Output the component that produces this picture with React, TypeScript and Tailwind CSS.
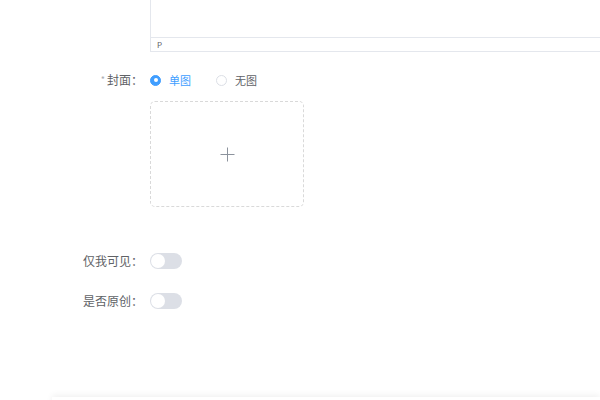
import React from "react";

const font = { fontFamily: '"Noto Sans CJK SC", "Liberation Sans", sans-serif' };

function Label({ children, required }: { children: React.ReactNode; required?: boolean }) {
  return (
    <div className="w-[150px] shrink-0 pr-[7px] text-right text-[12px] text-[#606266] leading-[20px]">
      {required && <span className="text-[#a8abb2] mr-[2px] text-[9px] align-top">*</span>}
      {children}
    </div>
  );
}

function Radio({ label, checked }: { label: string; checked?: boolean }) {
  return (
    <label className="flex items-center gap-[8px] cursor-pointer">
      <span
        className={`w-[11px] h-[11px] rounded-full border flex items-center justify-center ${
          checked ? "border-[#409eff] bg-[#409eff]" : "border-[#dcdfe6] bg-white"
        }`}
      >
        {checked && <span className="w-[4px] h-[4px] rounded-full bg-white" />}
      </span>
      <span className={`text-[11px] ${checked ? "text-[#409eff]" : "text-[#606266]"}`}>{label}</span>
    </label>
  );
}

function Switch() {
  return (
    <div className="w-[32px] h-[16px] rounded-full bg-[#dcdfe6] p-[1px] flex items-center">
      <span className="w-[14px] h-[14px] rounded-full bg-white" />
    </div>
  );
}

export default function App() {
  return (
    <div className="relative w-[600px] h-[400px] bg-white overflow-hidden" style={font}>
      <div className="flex flex-col">
        {/* editor tail */}
        <div className="flex">
          <div className="w-[150px] shrink-0" />
          <div className="flex-1 -mt-[20px] border border-r-0 border-[#e4e7ed]">
            <div className="h-[56px]" />
            <div className="h-[14px] border-t border-[#e4e7ed] px-[6px] text-[8px] leading-[13px] text-[#606266]">
              P
            </div>
          </div>
        </div>

        {/* cover */}
        <div className="flex mt-[18px]">
          <Label required>封面：</Label>
          <div className="flex flex-col">
            <div className="flex items-center gap-[25px] h-[20px]">
              <Radio label="单图" checked />
              <Radio label="无图" />
            </div>
            <div className="mt-[11px] w-[154px] h-[106px] border border-dashed border-[#d9d9d9] rounded-[5px] flex items-center justify-center">
              <svg width="15" height="15" viewBox="0 0 15 15" fill="none">
                <path d="M7.5 0.5v14M0.5 7.5h14" stroke="#8c939d" strokeWidth="1" />
              </svg>
            </div>
          </div>
        </div>

        {/* only me */}
        <div className="flex items-center mt-[44px] h-[20px]">
          <Label>仅我可见：</Label>
          <Switch />
        </div>

        {/* original */}
        <div className="flex items-center mt-[20px] h-[20px]">
          <Label>是否原创：</Label>
          <Switch />
        </div>
      </div>

      {/* footer bar peeking in */}
      <div className="absolute left-[52px] right-0 top-[397px] h-[20px] bg-white shadow-[0_-2px_6px_rgba(0,0,0,0.06)]" />
    </div>
  );
}
